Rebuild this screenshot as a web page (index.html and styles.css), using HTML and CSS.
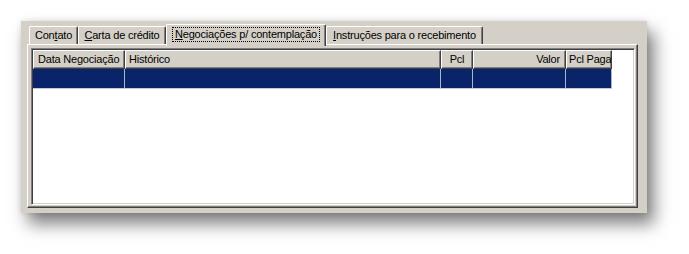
FILE: index.html
```html
<!DOCTYPE html>
<html lang="en">
<head>
    <meta charset="UTF-8">
    <title>Negociações p/ contemplação</title>
    <link rel="stylesheet" href="styles.css">
</head>
<body>
    <div class="panel">
        <div class="tabs">
            <div class="tab tab-contato">Con<u>t</u>ato</div>
            <div class="tab tab-carta"><u>C</u>arta de crédito</div>
            <div class="tab tab-negociacoes active"><span class="focus"><u>N</u>egociações p/ contemplação</span></div>
            <div class="tab tab-instrucoes"><u>I</u>nstruções para o recebimento</div>
        </div>

        <div class="page">
            <div class="list">
                <div class="list-header">
                    <div class="col col-data">Data Negociação</div>
                    <div class="col col-historico">Histórico</div>
                    <div class="col col-pcl center">Pcl</div>
                    <div class="col col-valor right">Valor</div>
                    <div class="col col-paga">Pcl Paga</div>
                </div>
                <div class="list-row selected">
                    <div class="cell col-data"></div>
                    <div class="cell col-historico"></div>
                    <div class="cell col-pcl"></div>
                    <div class="cell col-valor"></div>
                    <div class="cell col-paga"></div>
                </div>
            </div>
        </div>
    </div>
</body>
</html>
```

FILE: styles.css
```css
/* Windows classic look */
html {
    height: 100%;
}

body {
    box-sizing: border-box;
    min-height: 100%;
    margin: 0;
    padding: 21px 0 0 21px;
    background-color: #fff;
    font-family: "Liberation Sans", Arial, sans-serif;
    font-size: 11px;
    letter-spacing: -0.2px;
    color: #000;
}

.panel {
    box-sizing: border-box;
    width: 626px;
    height: 192px;
    padding: 3px 9px 5px 6px;
    background-color: #d4d0c8;
    box-shadow: 7px 11px 16px rgba(0, 0, 0, 0.5), 0 0 6px rgba(0, 0, 0, 0.12);
}

/* Tabs */
.tabs {
    display: flex;
    align-items: flex-end;
    height: 20px;
    padding-left: 2px;
    position: relative;
    z-index: 1;
}

.tab {
    box-sizing: border-box;
    height: 18px;
    display: flex;
    align-items: center;
    justify-content: center;
    border-top: 1px solid #fff;
    border-left: 1px solid #fff;
    border-right: 1px solid #404040;
    border-radius: 2px 2px 0 0;
    box-shadow: inset -1px 0 #808080;
    white-space: nowrap;
    padding-bottom: 1px;
}

.tab u {
    text-decoration-thickness: 1px;
    text-underline-offset: 1px;
}

.tab-contato { width: 49px; }
.tab-carta { width: 88px; }
.tab-negociacoes { width: 160px; }
.tab-instrucoes { width: 157px; }

.tab.active {
    height: 22px;
    margin-bottom: -2px;
    background-color: #d4d0c8;
    padding-bottom: 3px;
}

.tab .focus {
    padding: 0 2px 1px 2px;
    outline: 1px dotted #000;
    outline-offset: 0;
}

/* Tab page */
.page {
    box-sizing: border-box;
    height: 164px;
    padding: 3px 2px 2px 3px;
    border-top: 1px solid #fff;
    border-left: 1px solid #fff;
    border-right: 1px solid #404040;
    border-bottom: 1px solid #404040;
    box-shadow: inset -1px -1px #808080;
}

/* List view */
.list {
    box-sizing: border-box;
    height: 157px;
    padding: 1px;
    background-color: #fff;
    border-top: 1px solid #808080;
    border-left: 1px solid #808080;
    border-right: 1px solid #fff;
    border-bottom: 1px solid #fff;
    box-shadow: inset 1px 1px #404040, inset -1px -1px #d4d0c8;
}

.list-header,
.list-row {
    display: flex;
    width: max-content;
}

.col {
    box-sizing: border-box;
    height: 19px;
    line-height: 16px;
    padding: 0 3px;
    background-color: #d4d0c8;
    border-top: 1px solid #fff;
    border-left: 1px solid #fff;
    border-right: 1px solid #404040;
    border-bottom: 1px solid #404040;
    box-shadow: inset -1px -1px #808080;
    white-space: nowrap;
    overflow: hidden;
}

.col.center { text-align: center; }
.col.right { text-align: right; padding-right: 5px; }

.col-data { width: 92px; padding-left: 4px; }
.col-historico { width: 316px; }
.col-pcl { width: 32px; }
.col-valor { width: 93px; }
.col-paga { width: 46px; padding: 0 0 0 2px; }

.list-row.selected {
    height: 19px;
    border-bottom: 1px solid #c4cad8;
}

.selected .cell {
    box-sizing: border-box;
    background-color: #0a246a;
    border-right: 1px solid #a8b6d4;
}
```
